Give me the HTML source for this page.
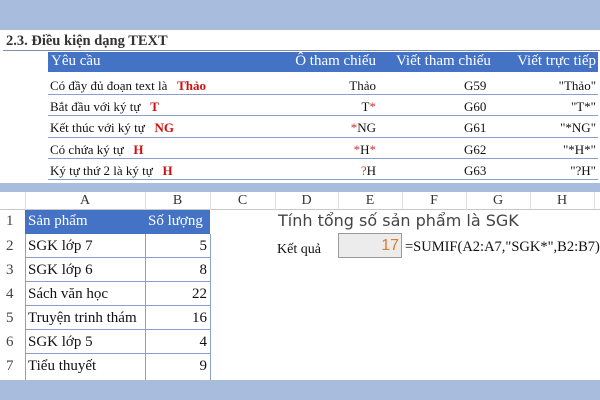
<!DOCTYPE html><html><head><meta charset="utf-8"><style>
*{margin:0;padding:0;box-sizing:border-box}
body{width:600px;height:400px;background:#a8bcde;position:relative;overflow:hidden;font-family:"Liberation Serif",serif;color:#111}
.p{position:absolute;background:#fff}
.a{position:absolute;white-space:nowrap}
.r{color:#d01010;font-weight:bold}
.s{color:#d03030}
.hl{position:absolute;height:1px;background:#8aa0c8}
.vl{position:absolute;width:1px;background:#8aa0c8}
</style></head><body>
<div class="p" style="left:0;top:30px;width:600px;height:153px"></div>
<div class="a" style="left:6px;top:33px;font-size:14.5px;font-weight:bold;color:#333">2.3. Điều kiện dạng TEXT</div>
<div class="hl" style="left:3px;top:50px;width:597px;background:#7f8fb0"></div>
<div class="a" style="left:48px;top:52px;width:550px;height:20px;background:#4472c4"></div>
<div class="a" style="left:51px;top:53px;font-size:15px;color:#fff">Yêu cầu</div>
<div class="a" style="left:270px;top:53px;font-size:15px;color:#fff;width:106px;text-align:right">Ô tham chiếu</div>
<div class="a" style="left:396px;top:53px;font-size:15px;color:#fff">Viết tham chiếu</div>
<div class="a" style="left:480px;top:53px;font-size:15px;color:#fff;width:116px;text-align:right">Viết trực tiếp</div>
<div class="hl" style="left:48px;top:94px;width:550px"></div>
<div class="hl" style="left:48px;top:115px;width:550px"></div>
<div class="hl" style="left:48px;top:137px;width:550px"></div>
<div class="hl" style="left:48px;top:158px;width:550px"></div>
<div class="hl" style="left:48px;top:179px;width:550px"></div>
<div style="font-size:13px">
<div class="a" style="left:50px;top:78px">Có đầy đủ đoạn text là &nbsp;&nbsp;<span class="r">Thảo</span></div>
<div class="a" style="left:50px;top:99px">Bắt đầu với ký tự &nbsp;&nbsp;<span class="r">T</span></div>
<div class="a" style="left:50px;top:120px">Kết thúc với ký tự &nbsp;&nbsp;<span class="r">NG</span></div>
<div class="a" style="left:50px;top:142px">Có chứa ký tự &nbsp;&nbsp;<span class="r">H</span></div>
<div class="a" style="left:50px;top:163px">Ký tự thứ 2 là ký tự &nbsp;&nbsp;<span class="r">H</span></div>
<div class="a" style="left:300px;top:78px;width:76px;text-align:right">Thảo</div>
<div class="a" style="left:300px;top:99px;width:76px;text-align:right">T<span class="s">*</span></div>
<div class="a" style="left:300px;top:120px;width:76px;text-align:right"><span class="s">*</span>NG</div>
<div class="a" style="left:300px;top:142px;width:76px;text-align:right"><span class="s">*</span>H<span class="s">*</span></div>
<div class="a" style="left:300px;top:163px;width:76px;text-align:right"><span class="s">?</span>H</div>
<div class="a" style="left:464px;top:78px">G59</div>
<div class="a" style="left:464px;top:99px">G60</div>
<div class="a" style="left:464px;top:120px">G61</div>
<div class="a" style="left:464px;top:142px">G62</div>
<div class="a" style="left:464px;top:163px">G63</div>
<div class="a" style="left:500px;top:78px;width:96px;text-align:right">"Thảo"</div>
<div class="a" style="left:500px;top:99px;width:96px;text-align:right">"T*"</div>
<div class="a" style="left:500px;top:120px;width:96px;text-align:right">"*NG"</div>
<div class="a" style="left:500px;top:142px;width:96px;text-align:right">"*H*"</div>
<div class="a" style="left:500px;top:163px;width:96px;text-align:right">"?H"</div>
</div>

<div class="p" style="left:0;top:192px;width:600px;height:188px"></div>
<div class="a" style="left:0;top:192px;width:600px;height:18px;border-bottom:1px solid #c8c8c8"></div>
<div style="font-size:14px;color:#333">
<div class="a" style="left:25px;top:193px;width:120px;text-align:center">A</div>
<div class="a" style="left:145px;top:193px;width:65px;text-align:center">B</div>
<div class="a" style="left:210px;top:193px;width:65px;text-align:center">C</div>
<div class="a" style="left:275px;top:193px;width:63px;text-align:center">D</div>
<div class="a" style="left:338px;top:193px;width:64px;text-align:center">E</div>
<div class="a" style="left:402px;top:193px;width:64px;text-align:center">F</div>
<div class="a" style="left:466px;top:193px;width:64px;text-align:center">G</div>
<div class="a" style="left:530px;top:193px;width:64px;text-align:center">H</div>
</div>
<div class="vl" style="left:25px;top:192px;height:18px;background:#ddd"></div>
<div class="vl" style="left:145px;top:192px;height:18px;background:#ddd"></div>
<div class="vl" style="left:210px;top:192px;height:18px;background:#ddd"></div>
<div class="vl" style="left:275px;top:192px;height:18px;background:#ddd"></div>
<div class="vl" style="left:338px;top:192px;height:18px;background:#ddd"></div>
<div class="vl" style="left:402px;top:192px;height:18px;background:#ddd"></div>
<div class="vl" style="left:466px;top:192px;height:18px;background:#ddd"></div>
<div class="vl" style="left:530px;top:192px;height:18px;background:#ddd"></div>
<div class="vl" style="left:594px;top:192px;height:18px;background:#ddd"></div>
<div class="a" style="left:25px;top:210px;width:185px;height:24px;background:#4472c4"></div>
<div class="a" style="left:28px;top:213px;font-size:15px;color:#fff">Sản phẩm</div>
<div class="a" style="left:148px;top:213px;font-size:15px;color:#fff">Số lượng</div>
<div class="vl" style="left:25px;top:234px;height:146px"></div>
<div class="vl" style="left:145px;top:234px;height:146px"></div>
<div class="vl" style="left:210px;top:234px;height:146px"></div>
<div class="hl" style="left:25px;top:257px;width:185px"></div>
<div class="hl" style="left:25px;top:281px;width:185px"></div>
<div class="hl" style="left:25px;top:305px;width:185px"></div>
<div class="hl" style="left:25px;top:329px;width:185px"></div>
<div class="hl" style="left:25px;top:353px;width:185px"></div>
<div style="font-size:15px">
<div class="a" style="left:6px;top:213px;color:#444">1</div>
<div class="a" style="left:6px;top:238px;color:#444">2</div>
<div class="a" style="left:6px;top:262px;color:#444">3</div>
<div class="a" style="left:6px;top:286px;color:#444">4</div>
<div class="a" style="left:6px;top:310px;color:#444">5</div>
<div class="a" style="left:6px;top:334px;color:#444">6</div>
<div class="a" style="left:6px;top:358px;color:#444">7</div>
<div class="a" style="left:28px;top:238px">SGK lớp 7</div>
<div class="a" style="left:28px;top:262px">SGK lớp 6</div>
<div class="a" style="left:28px;top:286px">Sách văn học</div>
<div class="a" style="left:28px;top:310px">Truyện trinh thám</div>
<div class="a" style="left:28px;top:334px">SGK lớp 5</div>
<div class="a" style="left:28px;top:358px">Tiểu thuyết</div>
<div class="a" style="left:150px;top:238px;width:57px;text-align:right">5</div>
<div class="a" style="left:150px;top:262px;width:57px;text-align:right">8</div>
<div class="a" style="left:150px;top:286px;width:57px;text-align:right">22</div>
<div class="a" style="left:150px;top:310px;width:57px;text-align:right">16</div>
<div class="a" style="left:150px;top:334px;width:57px;text-align:right">4</div>
<div class="a" style="left:150px;top:358px;width:57px;text-align:right">9</div>
</div>
<div class="a" style="left:278px;top:211px;font-family:'DejaVu Sans',sans-serif;font-size:16px;color:#444">Tính tổng số sản phẩm là SGK</div>
<div class="a" style="left:277px;top:242px;font-size:14px">Kết quả</div>
<div class="a" style="left:338px;top:233px;width:64px;height:25px;background:#ececec;border:1px solid #999"></div>
<div class="a" style="left:340px;top:237px;width:59px;text-align:right;font-size:16px;color:#e07b2a;font-family:'Liberation Sans',sans-serif">17</div>
<div class="a" style="left:405px;top:239px;font-size:14.5px">=SUMIF(A2:A7,"SGK*",B2:B7)</div>
</body></html>
